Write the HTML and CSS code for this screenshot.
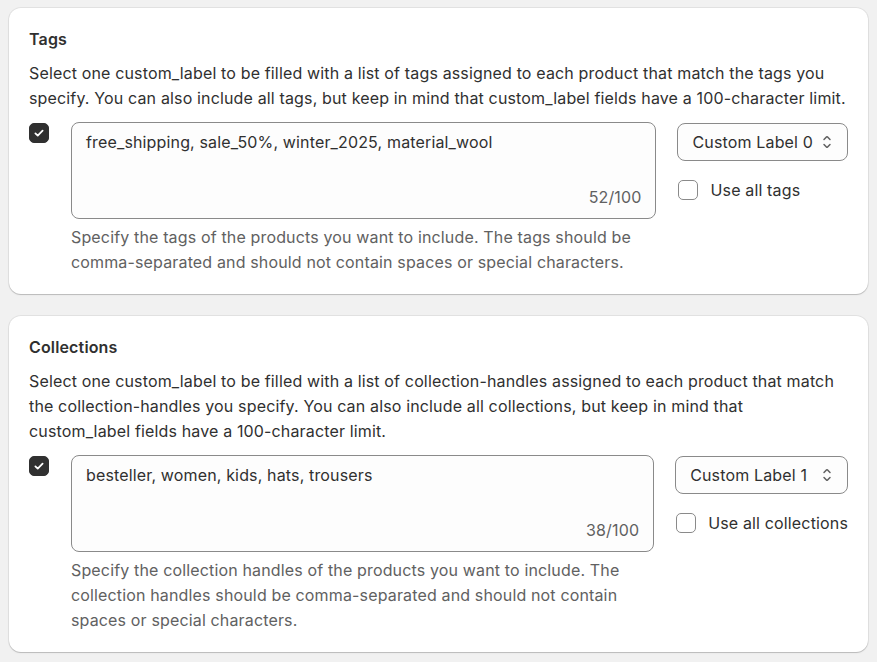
FILE: index.html
```html
<!DOCTYPE html>
<html lang="en">
<head>
<meta charset="utf-8">
<title>Custom labels</title>
<link rel="stylesheet" href="styles.css">
</head>
<body>
<section class="card">
  <h2 class="title">Tags</h2>
  <p class="desc">Select one custom_label to be filled with a list of tags assigned to each product that match the tags you specify. You can also include all tags, but keep in mind that custom_label fields have a 100-character limit.</p>
  <div class="row">
    <span class="check checked"><svg viewBox="0 0 20 20" width="20" height="20"><path d="M6 10.4l2.6 2.5L14 7.4" fill="none" stroke="#fff" stroke-width="2" stroke-linecap="round" stroke-linejoin="round"/></svg></span>
    <div class="field">
      <div class="textarea">
        <div class="value">free_shipping, sale_50%, winter_2025, material_wool</div>
        <div class="count">52/100</div>
      </div>
      <p class="hint">Specify the tags of the products you want to include. The tags should be comma-separated and should not contain spaces or special characters.</p>
    </div>
    <div class="side">
      <div class="select"><span>Custom Label 0</span><svg class="chev" viewBox="0 0 20 20" width="20" height="20"><path d="M10.884 4.323a1.25 1.25 0 0 0-1.768 0l-2.646 2.647a.75.75 0 0 0 1.06 1.06l2.47-2.47 2.47 2.47a.75.75 0 1 0 1.06-1.06l-2.646-2.647Z"/><path d="m13.53 13.03-2.646 2.647a1.25 1.25 0 0 1-1.768 0l-2.646-2.647a.75.75 0 0 1 1.06-1.06l2.47 2.47 2.470-2.47a.75.75 0 0 1 1.06 1.06Z"/></svg></div>
      <label class="option"><span class="check"></span><span>Use all tags</span></label>
    </div>
  </div>
</section>
<section class="card">
  <h2 class="title">Collections</h2>
  <p class="desc">Select one custom_label to be filled with a list of collection-handles assigned to each product that match the collection-handles you specify. You can also include all collections, but keep in mind that custom_label fields have a 100-character limit.</p>
  <div class="row">
    <span class="check checked"><svg viewBox="0 0 20 20" width="20" height="20"><path d="M6 10.4l2.6 2.5L14 7.4" fill="none" stroke="#fff" stroke-width="2" stroke-linecap="round" stroke-linejoin="round"/></svg></span>
    <div class="field">
      <div class="textarea">
        <div class="value">besteller, women, kids, hats, trousers</div>
        <div class="count">38/100</div>
      </div>
      <p class="hint">Specify the collection handles of the products you want to include. The collection handles should be comma-separated and should not contain spaces or special characters.</p>
    </div>
    <div class="side">
      <div class="select"><span>Custom Label 1</span><svg class="chev" viewBox="0 0 20 20" width="20" height="20"><path d="M10.884 4.323a1.25 1.25 0 0 0-1.768 0l-2.646 2.647a.75.75 0 0 0 1.06 1.06l2.47-2.470 2.47 2.47a.75.75 0 1 0 1.06-1.06l-2.646-2.647Z"/><path d="m13.53 13.03-2.646 2.647a1.25 1.25 0 0 1-1.768 0l-2.646-2.647a.75.75 0 0 1 1.06-1.06l2.47 2.47 2.47-2.47a.75.75 0 0 1 1.06 1.06Z"/></svg></div>
      <label class="option"><span class="check"></span><span>Use all collections</span></label>
    </div>
  </div>
</section>
</body>
</html>
```
FILE: styles.css
```css
html, body {
  margin: 0;
  background: #f1f1f1;
}
body {
  padding: 8px 9px;
  font-family: Inter, "Noto Sans", sans-serif;
  font-size: 16px;
  letter-spacing: 0.15px;
  color: #303030;
}
.card {
  background: #ffffff;
  border-radius: 12px;
  padding: 20px 20px 19px 20px;
  margin-bottom: 22px;
  box-shadow: 0 1px 0 rgba(26,26,26,0.12), 0 0 0 1px rgba(0,0,0,0.06), 0 1px 2px rgba(0,0,0,0.08);
}
.title {
  margin: 0;
  font-size: 16px;
  font-weight: 600;
  line-height: 22px;
}
.desc {
  margin: 11px 0 0;
  line-height: 25px;
}
.row {
  display: flex;
  align-items: flex-start;
  margin-top: 11px;
}
.check {
  flex: none;
  box-sizing: border-box;
  width: 20px;
  height: 20px;
  border-radius: 5px;
  border: 1px solid #8a8a8a;
  background: #fff;
  display: inline-flex;
  align-items: center;
  justify-content: center;
}
.check.checked {
  background: #303030;
  border-color: #303030;
  margin-top: 1px;
}
.check svg {
  width: 18px;
  height: 18px;
}
.field {
  flex: 1;
  margin-left: 22px;
  min-width: 0;
}
.textarea {
  box-sizing: border-box;
  height: 97px;
  border: 1px solid #8a8a8a;
  border-radius: 8px;
  background: #fdfdfd;
  padding: 7px 14px 9px 14px;
  display: flex;
  flex-direction: column;
  justify-content: space-between;
  line-height: 24px;
}
.count {
  text-align: right;
  color: #616161;
}
.hint {
  margin: 6px 0 0;
  line-height: 25px;
  color: #616161;
}
.side {
  flex: none;
  margin-left: 21px;
  display: flex;
  flex-direction: column;
}
.select {
  box-sizing: border-box;
  height: 38px;
  margin-top: 1px;
  border: 1px solid #8a8a8a;
  border-radius: 8px;
  background: #fdfdfd;
  padding: 0 10px 0 14px;
  display: flex;
  align-items: center;
  justify-content: space-between;
  gap: 4px;
}
.chev {
  fill: #616161;
  width: 20px;
  height: 20px;
}
.option {
  display: flex;
  align-items: center;
  gap: 12px;
  margin-top: 18px;
  margin-left: 1px;
  line-height: 22px;
}
.option .check {
  width: 20px;
  height: 20px;
}
```
